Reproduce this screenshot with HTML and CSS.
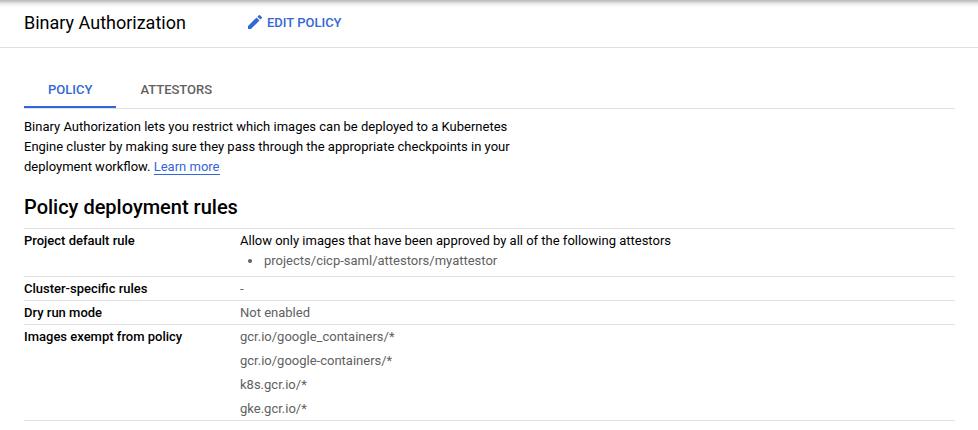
FILE: index.html
```html
<!DOCTYPE html>
<html lang="en">
<head>
<meta charset="utf-8">
<title>Binary Authorization</title>
<link rel="stylesheet" href="styles.css">
</head>
<body>
<header class="topbar">
  <h1 class="title">Binary Authorization</h1>
  <a class="edit"><svg class="pencil" viewBox="3 3 18 18"><path d="M3 17.25V21h3.75L17.81 9.94l-3.75-3.75L3 17.25zM20.71 7.04a1 1 0 0 0 0-1.41l-2.34-2.34a1 1 0 0 0-1.41 0l-1.83 1.83 3.75 3.75 1.83-1.83z"/></svg><span>EDIT POLICY</span></a>
</header>
<main class="content">
  <nav class="tabs">
    <a class="tab active">POLICY</a>
    <a class="tab">ATTESTORS</a>
  </nav>
  <p class="intro">Binary Authorization lets you restrict which images can be deployed to a Kubernetes<br>Engine cluster by making sure they pass through the appropriate checkpoints in your<br>deployment workflow. <a class="link">Learn more</a></p>
  <h2 class="heading">Policy deployment rules</h2>
  <dl class="rules">
    <div class="row first"><dt>Project default rule</dt><dd><span class="strong">Allow only images that have been approved by all of the following attestors</span><ul><li>projects/cicp-saml/attestors/myattestor</li></ul></dd></div>
    <div class="row"><dt>Cluster-specific rules</dt><dd>-</dd></div>
    <div class="row"><dt>Dry run mode</dt><dd>Not enabled</dd></div>
    <div class="row"><dt>Images exempt from policy</dt><dd class="images"><span>gcr.io/google_containers/*</span><span>gcr.io/google-containers/*</span><span>k8s.gcr.io/*</span><span>gke.gcr.io/*</span></dd></div>
  </dl>
</main>
</body>
</html>
```
FILE: styles.css
```css
* { box-sizing: border-box; }
body { margin: 0; height: 430px; overflow: hidden; background: #fff; color: #000; font: 13px/20px Roboto, sans-serif; }
.topbar { display: flex; align-items: center; height: 48px; padding: 0 24px 1px; border-bottom: 1px solid #e0e0e0; background: linear-gradient(#bfbfbf 1px, #d6d6d6 2px, #ededed 4px, #fafafa 6px, #fff 8px); }
.title { width: 224px; margin: 0; font-size: 18px; font-weight: 400; line-height: 24px; white-space: nowrap; }
.edit { display: flex; align-items: center; gap: 5px; color: #3367d6; font-weight: 500; }
.pencil { width: 14px; height: 14px; margin-bottom: 2px; fill: #3367d6; }
.content { padding: 24px 23px 0 24px; }
.tabs { display: flex; height: 37px; border-bottom: 1px solid #e0e0e0; }
.tab { height: 36px; padding: 8px 24px 0; color: #616161; font-weight: 500; }
.active { color: #3367d6; border-bottom: 2px solid #3367d6; }
.intro { margin: 8px 0 0; }
.link { color: #3367d6; border-bottom: 1px solid #3367d6; }
.heading { margin: 18px 0 9px; font-size: 20px; line-height: 24px; font-weight: 500; }
.rules { margin: 0; border-bottom: 1px solid #e0e0e0; }
.row { display: flex; min-height: 24px; padding: 2px 0 1px; border-top: 1px solid #e0e0e0; }
.first { height: 48px; }
dt { width: 216px; font-weight: 500; }
dd { margin: 0; color: #616161; }
.strong { color: #000; }
ul { margin: 0; padding-left: 23px; }
li { padding-left: 1px; }
.images { display: flex; flex-direction: column; gap: 4px; }
```
